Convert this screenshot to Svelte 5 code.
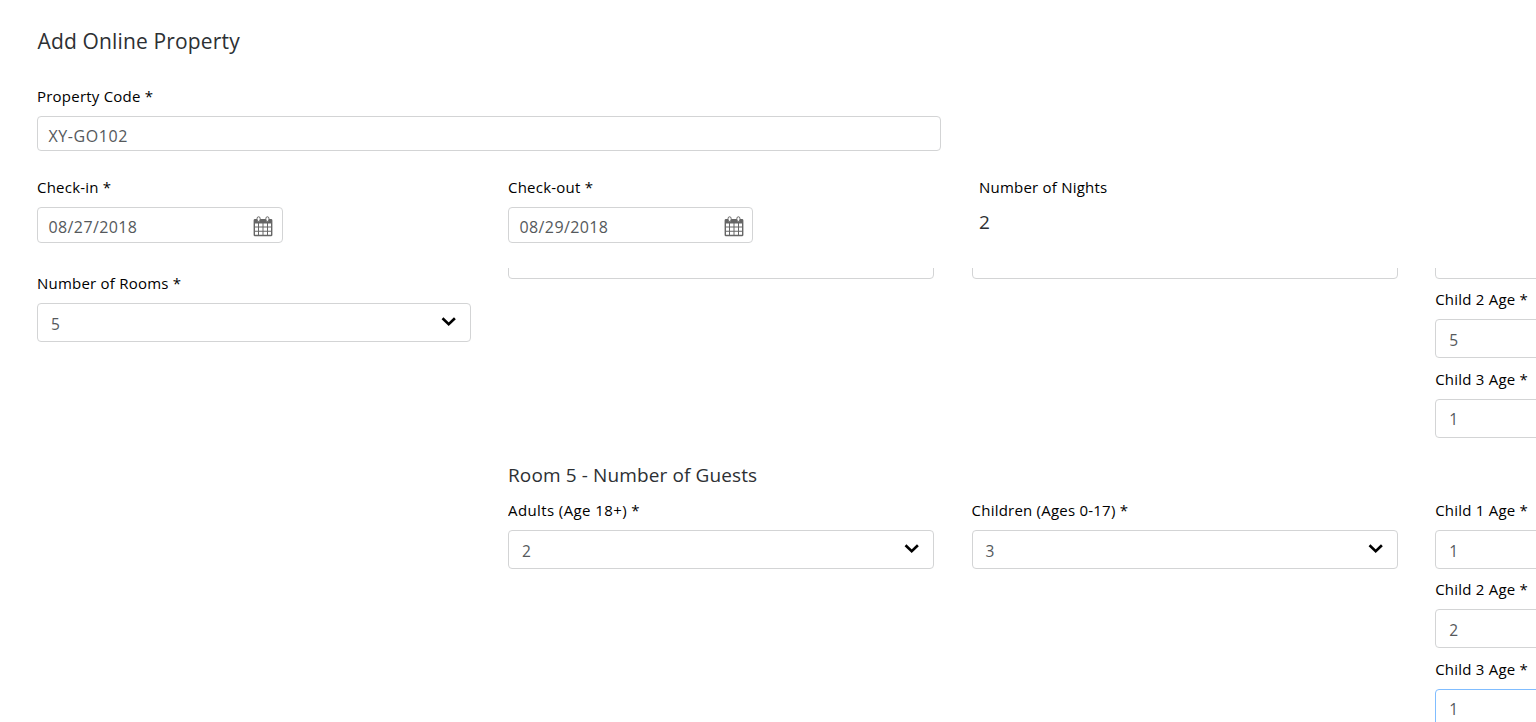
<script>
  const previousRoom = [
    [{}],
    [{}],
    [
      {},
      { label: 'Child 2 Age *', value: '5' },
      { label: 'Child 3 Age *', value: '1' }
    ]
  ];
  const currentRoom = [
    [{ label: 'Adults (Age 18+) *', value: '2', wide: true }],
    [{ label: 'Children (Ages 0-17) *', value: '3' }],
    [
      { label: 'Child 1 Age *', value: '1' },
      { label: 'Child 2 Age *', value: '2' },
      { label: 'Child 3 Age *', value: '1', focused: true }
    ]
  ];
</script>

{#snippet calendar()}
  <svg class="calendar" width="20" height="21" viewBox="0 0 20 21">
    <path d="M2 3h16a1.400 1.400 0 0 1 1.400 1.400V18.900a1.400 1.400 0 0 1-1.400 1.400H2a1.400 1.400 0 0 1-1.400-1.400V4.400A1.400 1.400 0 0 1 2 3z" fill="#666" />
    <path d="M2 7.500h3v3H2zM6 7.500h3.500v3H6zM10.500 7.500H14v3h-3.500zM15 7.500h3v3h-3zM2 11.500h3v3.200H2zM6 11.500h3.500v3.200H6zM10.500 11.500H14v3.200h-3.500zM15 11.500h3v3.200h-3zM2 15.700h3v3.100H2zM6 15.700h3.500v3.100H6zM10.500 15.700H14v3.100h-3.500zM15 15.700h3v3.100h-3z" fill="#fff" />
    <rect x="4.100" y=".8" width="3" height="4.600" rx="1.500" fill="#fff" stroke="#666" />
    <rect x="12.900" y=".8" width="3" height="4.600" rx="1.500" fill="#fff" stroke="#666" />
  </svg>
{/snippet}

{#snippet select(f)}
  <div class="field">
    {#if f.label}<div class="label" class:wide={f.wide}>{f.label}</div>{/if}
    <div class="box select" class:focused={f.focused}>
      {#if f.value}
        <span>{f.value}</span>
        <svg width="16" height="12" viewBox="0 0 16 12">
          <path d="M1.500 2.300L7.700 8.300L13.900 2.300" fill="none" stroke="#000" stroke-width="2.600" />
        </svg>
      {/if}
    </div>
  </div>
{/snippet}

{#snippet guests(columns)}
  <div class="guests">
    {#each columns as column}
      <div class="column">
        {#each column as f}
          {@render select(f)}
        {/each}
      </div>
    {/each}
  </div>
{/snippet}

<main>
  <h1>Add Online Property</h1>
  <div class="code">
    <div class="label">Property Code *</div>
    <div class="box input"><span>XY-GO102</span></div>
  </div>
  <div class="stay">
    <div>
      <div class="label">Check-in *</div>
      <div class="box date"><span>08/27/2018</span>{@render calendar()}</div>
    </div>
    <div>
      <div class="label">Check-out *</div>
      <div class="box date"><span>08/29/2018</span>{@render calendar()}</div>
    </div>
    <div>
      <div class="label">Number of Nights</div>
      <div class="nights">2</div>
    </div>
  </div>
  <div class="lower">
    <div class="rooms">{@render select({ label: 'Number of Rooms *', value: '5' })}</div>
    <div class="panel">
      <div class="scrolled">
        {@render guests(previousRoom)}
        <h2>Room 5 - Number of Guests</h2>
        {@render guests(currentRoom)}
      </div>
    </div>
  </div>
</main>

<style>
  :global(body) {
    background: #fff;
    overflow: hidden;
  }
  main {
    box-sizing: border-box;
    width: 1536px;
    height: 722px;
    padding: 26px 0 0 37px;
    overflow: hidden;
    font-family: 'Open Sans', 'Noto Sans', sans-serif;
    color: #55595c;
  }
  h1 {
    margin: 0 0 30px;
    padding-left: 0.500px;
    font-size: 21px;
    line-height: 30px;
    font-weight: 400;
    letter-spacing: 0.150px;
    color: #2d3033;
  }
  .label {
    height: 20px;
    margin-bottom: 10px;
    font-size: 15px;
    line-height: 21px;
    letter-spacing: 0.220px;
    white-space: nowrap;
    color: #000;
  }
  .wide {
    letter-spacing: 0.400px;
  }
  .box {
    box-sizing: border-box;
    display: flex;
    align-items: center;
    justify-content: space-between;
    border: 1px solid #d3d4d5;
    border-radius: 4px;
    background: #fff;
    font-size: 15.500px;
    line-height: 20px;
  }
  .box span {
    padding-top: 3px;
  }
  .input {
    width: 904px;
    height: 35px;
    padding: 0 10.500px;
    font-size: 16px;
    letter-spacing: 0.580px;
  }
  .input span {
    padding-top: 5px;
  }
  .stay {
    display: grid;
    grid-template-columns: 471px 471px 1fr;
    margin-top: 26px;
    height: 91px;
  }
  .date {
    width: 246px;
    height: 36px;
    padding: 0 9px 0 10.500px;
    font-size: 16px;
    letter-spacing: 0.400px;
  }
  .stay > div:nth-child(2) .date {
    width: 245px;
    padding-right: 8px;
  }
  .calendar {
    margin-top: 3px;
  }
  .nights {
    font-size: 19px;
    line-height: 30px;
    color: #2d3033;
  }
  .lower {
    display: flex;
    gap: 37px;
  }
  .rooms {
    flex: 0 0 434px;
    padding-top: 5px;
  }
  .select {
    height: 39px;
    padding: 0 13px;
  }
  .select svg {
    margin-top: -1px;
  }
  .focused {
    border-color: #80bdff;
  }
  .panel {
    flex: 1;
    min-width: 0;
    height: 454px;
    overflow: hidden;
  }
  .scrolled {
    width: 1354px;
    margin-top: -28px;
  }
  .guests {
    display: grid;
    grid-template-columns: repeat(3, 426px);
    column-gap: 37.600px;
  }
  .field + .field {
    margin-top: 10px;
  }
  .field + .field + .field {
    margin-top: 11px;
  }
  .field + .field + .field span {
    padding-top: 1px;
  }
  h2 {
    margin: 23px 0 10px;
    font-size: 19px;
    line-height: 29px;
    font-weight: 400;
    letter-spacing: 0.120px;
    color: #2d3033;
  }
</style>
